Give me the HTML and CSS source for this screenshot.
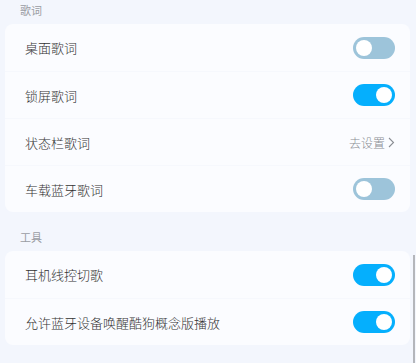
FILE: index.html
```html
<!DOCTYPE html>
<html lang="zh-CN">
<head>
    <meta charset="UTF-8">
    <meta name="viewport" content="width=device-width, initial-scale=1.0">
    <title>设置</title>
    <link rel="stylesheet" href="styles.css">
</head>
<body>
    <div class="settings">
        <div class="group-title">歌词</div>
        <div class="card">
            <div class="row">
                <span class="label">桌面歌词</span>
                <span class="switch"><span class="knob"></span></span>
            </div>
            <div class="row">
                <span class="label">锁屏歌词</span>
                <span class="switch on"><span class="knob"></span></span>
            </div>
            <div class="row">
                <span class="label">状态栏歌词</span>
                <span class="link">去设置<svg class="chevron" width="7" height="11" viewBox="0 0 7 11"><path d="M1 1l4.5 4.5L1 10" fill="none" stroke="#8a8d93" stroke-width="1.1"/></svg></span>
            </div>
            <div class="row">
                <span class="label">车载蓝牙歌词</span>
                <span class="switch"><span class="knob"></span></span>
            </div>
        </div>

        <div class="group-title">工具</div>
        <div class="card">
            <div class="row">
                <span class="label">耳机线控切歌</span>
                <span class="switch on"><span class="knob"></span></span>
            </div>
            <div class="row">
                <span class="label">允许蓝牙设备唤醒酷狗概念版播放</span>
                <span class="switch on"><span class="knob"></span></span>
            </div>
        </div>

        <div class="group-title">模式</div>
    </div>
    <div class="scrollbar"></div>
</body>
</html>
```

FILE: styles.css
```css
body {
    margin: 0;
    height: 100vh;
    overflow: hidden;
    background-color: #f3f6fd;
    font-family: "Noto Sans CJK SC", "Noto Sans", sans-serif;
    color: #333;
}
.settings {
    margin-top: -15px;
}
.group-title {
    height: 39px;
    box-sizing: border-box;
    padding: 18px 0 0 20px;
    font-size: 11px;
    line-height: 14px;
    color: #9a9ca3;
}
.card {
    margin: 0 6px 0 5px;
    background-color: #fbfcff;
    border-radius: 8px;
}
.row {
    height: 47px;
    display: flex;
    align-items: center;
    justify-content: space-between;
    padding: 0 15px 0 20px;
    border-top: 1px solid #f6f8fd;
    box-sizing: border-box;
}
.row:first-child {
    border-top: none;
}
.label {
    font-size: 13px;
    font-weight: 300;
}
.link {
    display: flex;
    align-items: center;
    gap: 3px;
    font-size: 12px;
    font-weight: 300;
    color: #8a8d93;
}
/* toggle switch */
.switch {
    width: 42px;
    height: 22px;
    border-radius: 11px;
    background-color: #9dc4da;
    display: flex;
    align-items: center;
    padding: 0 3px;
    box-sizing: border-box;
}
.switch.on {
    background-color: #05affd;
    justify-content: flex-end;
}
.knob {
    width: 16px;
    height: 16px;
    border-radius: 50%;
    background-color: #fff;
}
.scrollbar {
    position: absolute;
    right: 1px;
    top: 255px;
    bottom: 0;
    width: 2px;
    background-color: #b4b6bb;
}
```
